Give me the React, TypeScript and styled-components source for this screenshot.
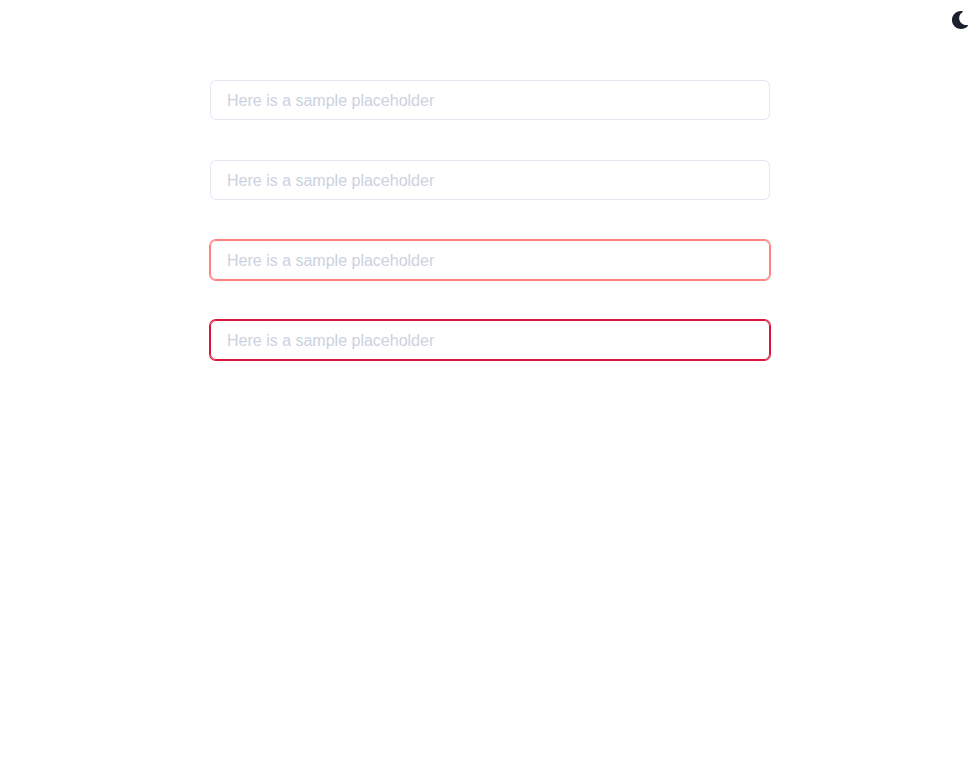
import React from "react";
import styled, { createGlobalStyle } from "styled-components";
import { FaMoon } from "react-icons/fa";

const GlobalStyle = createGlobalStyle`
  *, *::before, *::after {
    box-sizing: border-box;
  }
  body {
    margin: 0;
    background: #ffffff;
    color: #1a202c;
    font-family: "Liberation Sans", Arial, sans-serif;
    line-height: 1.5;
  }
`;

const Page = styled.div`
  min-height: 100vh;
`;

const Toolbar = styled.header`
  display: flex;
  justify-content: flex-end;
  height: 40px;
`;

const ModeButton = styled.button`
  display: flex;
  align-items: center;
  justify-content: center;
  width: 40px;
  height: 40px;
  padding: 0;
  border: 0;
  border-radius: 6px;
  background: transparent;
  color: #1a202c;
  cursor: pointer;
`;

const Form = styled.main`
  display: flex;
  flex-direction: column;
  gap: 40px;
  width: 560px;
  margin: 40px auto 0;
`;

const Field = styled.input<{ $accent?: string }>`
  width: 100%;
  height: 40px;
  padding: 2px 16px 0;
  border: 1px solid ${({ $accent }) => $accent ?? "#e2e8f0"};
  border-radius: 6px;
  outline: 0;
  background: transparent;
  box-shadow: ${({ $accent }) => ($accent ? `0 0 0 1px ${$accent}` : "none")};
  color: inherit;
  font-family: inherit;
  font-size: 16px;
  line-height: 24px;

  &::placeholder {
    color: #cad2de;
    opacity: 1;
  }
`;

const placeholder = "Here is a sample placeholder";
const accents = [undefined, undefined, "#fc8181", "#dc143c"];

export default function App() {
  return (
    <Page>
      <GlobalStyle />
      <Toolbar>
        <ModeButton aria-label="Switch to dark mode">
          <FaMoon size={18} />
        </ModeButton>
      </Toolbar>
      <Form>
        {accents.map((accent, index) => (
          <Field key={index} $accent={accent} placeholder={placeholder} />
        ))}
      </Form>
    </Page>
  );
}
